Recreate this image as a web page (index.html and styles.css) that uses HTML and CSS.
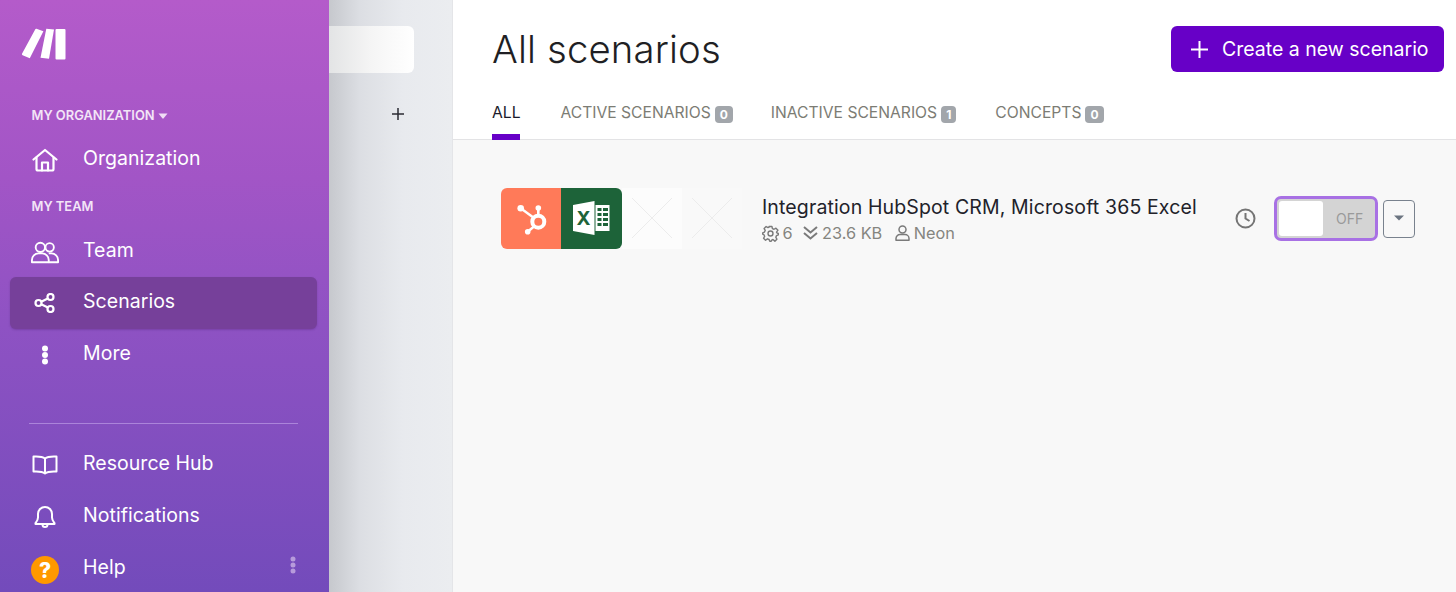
FILE: index.html
```html
<!DOCTYPE html>
<html lang="en">
<head>
<meta charset="utf-8">
<title>All scenarios</title>
<link rel="stylesheet" href="styles.css">
</head>
<body>
<div class="app">
  <aside class="sidebar">
    <svg class="logo" width="46" height="32" viewBox="0 0 46 32"><g fill="#fff"><path d="M15.500 .8 22.400 3.200 8.800 30.300 1.600 27.200Q.6 26.700 1 25.800L14.300 1.300Q14.700 .5 15.500 .8Z"/><path d="M25.300 .8 33 1.500 28 30.800 19.500 29.800Z"/><rect x="34.500" y="1" width="10" height="30.500" rx="1"/></g></svg>
    <div class="label org-label">MY ORGANIZATION<svg width="10" height="6" viewBox="0 0 10 6"><path d="M.5.500h9L5.700 5.300a1 1 0 0 1-1.400 0z" fill="#f0dcf5"/></svg></div>
    <a class="nav-item"><span class="nav-icon"><svg width="26" height="24" viewBox="0 0 26 24" fill="none" stroke="#fff" stroke-width="2.200" stroke-linejoin="round" stroke-linecap="round"><path d="M1.500 11.500 13 2l11.500 9.500"/><path d="M4.500 9.500V21a1.500 1.500 0 0 0 1.500 1.500h14a1.500 1.500 0 0 0 1.500-1.500V9.500"/><path d="M10 22.500V14.500h6v8"/></svg></span>Organization</a>
    <div class="label team-label">MY TEAM</div>
    <a class="nav-item"><span class="nav-icon"><svg width="28" height="23" viewBox="0 0 30 24" fill="none" stroke="#fff" stroke-width="2"><circle cx="10" cy="6.500" r="5"/><circle cx="20" cy="6.500" r="4.500"/><path d="M1 22.500v-2.500a7 7 0 0 1 7-7h4a7 7 0 0 1 7 7v2.500z" stroke-linejoin="round"/><path d="M19 13h3a7 7 0 0 1 7 7v2.500H19" stroke-linejoin="round"/></svg></span>Team</a>
    <a class="nav-item active"><span class="nav-icon"><svg width="22" height="20" viewBox="0 0 22 20" fill="none" stroke="#fff" stroke-width="2.200"><circle cx="16.500" cy="4" r="3"/><circle cx="4.500" cy="10" r="3"/><circle cx="16.500" cy="16" r="3"/><path d="M7.200 8.700 13.800 5.400M7.200 11.300l6.600 3.300"/></svg></span>Scenarios</a>
    <a class="nav-item"><span class="nav-icon"><svg width="8" height="20" viewBox="0 0 8 20" fill="#fff"><circle cx="4" cy="3.500" r="3"/><circle cx="4" cy="10" r="3"/><circle cx="4" cy="16.500" r="3"/></svg></span>More</a>
    <div class="spacer"></div>
    <hr class="divider">
    <a class="nav-item"><span class="nav-icon"><svg width="26" height="20" viewBox="0 0 26 20" fill="none" stroke="#fff" stroke-width="2" stroke-linejoin="round"><path d="M13 3.500C10.500 1.500 6.500 1.200 1.500 1.500v15c5-.3 9 0 11.500 2 2.500-2 6.500-2.300 11.500-2v-15C19.500 1.200 15.500 1.500 13 3.500z"/><path d="M13 3.500v15"/></svg></span>Resource Hub</a>
    <a class="nav-item"><span class="nav-icon"><svg width="22" height="24" viewBox="0 0 22 24" fill="none" stroke="#fff" stroke-width="2" stroke-linejoin="round"><path d="M11 2a7 7 0 0 0-7 7v3.500c0 2.500-1.200 3.800-2.500 5.500v1h19v-1c-1.300-1.700-2.500-3-2.500-5.500V9a7 7 0 0 0-7-7z"/><path d="M8.500 19.500a2.500 2.500 0 0 0 5 0"/></svg></span>Notifications</a>
    <a class="nav-item help"><span class="nav-icon"><span class="help-badge">?</span></span>Help<svg class="help-dots" width="6" height="18" viewBox="0 0 6 18" fill="#b79bdb"><circle cx="3" cy="3" r="2.500"/><circle cx="3" cy="9" r="2.500"/><circle cx="3" cy="15" r="2.500"/></svg></a>
  </aside>

  <section class="panel">
    <div class="search"></div>
    <div class="add-row">
      <svg width="12" height="12" viewBox="0 0 12 12" stroke="#2b2b33" stroke-width="1.500"><path d="M6 0v12M0 6h12"/></svg>
    </div>
  </section>

  <main class="main">
    <header class="head">
      <div class="title-row">
        <h1>All scenarios</h1>
        <button class="create"><svg width="17" height="17" viewBox="0 0 17 17" stroke="#fff" stroke-width="2"><path d="M8.500 0v17M0 8.500h17"/></svg>Create a new scenario</button>
      </div>
      <nav class="tabs">
        <a class="tab current">ALL</a>
        <a class="tab">ACTIVE SCENARIOS<span class="count">0</span></a>
        <a class="tab">INACTIVE SCENARIOS<span class="count">1</span></a>
        <a class="tab">CONCEPTS<span class="count">0</span></a>
      </nav>
    </header>
    <div class="content">
      <article class="row">
        <div class="apps">
          <span class="app-tile hubspot"><svg width="60" height="61" viewBox="0 0 60 61" fill="none" stroke="#fff"><circle cx="37.300" cy="33.700" r="6" stroke-width="4"/><path d="M37.300 27V21" stroke-width="2.600"/><circle cx="37.300" cy="20" r="2.800" fill="#fff" stroke="none"/><path d="M19.700 20.300 33 30" stroke-width="2.400"/><circle cx="19.700" cy="20.300" r="3.300" fill="#fff" stroke="none"/><path d="M33 38.500 26.700 43.700" stroke-width="2.400"/><circle cx="26.700" cy="43.700" r="2.800" fill="#fff" stroke="none"/></svg></span>
          <span class="app-tile excel"><svg width="37" height="34" viewBox="0 0 37 34"><path d="M0 4 21.500 0v34L0 30z" fill="#fff"/><path d="M22.500 4H36.500v26H22.500z" fill="#fff"/><path d="M24.500 7h4v3h-4zM30 7h5v3h-5zM24.500 12h4v3h-4zM30 12h5v3h-5zM24.500 17h4v3h-4zM30 17h5v3h-5zM24.500 22h4v3h-4zM30 22h5v3h-5z" fill="#1d6339"/><text x="10.500" y="24" class="xl">X</text></svg></span>
          <span class="app-tile blank"><svg width="40" height="40" viewBox="0 0 40 40" stroke="#ececec"><path d="M0 0l40 40M40 0 0 40"/></svg></span>
          <span class="app-tile blank faint"><svg width="40" height="40" viewBox="0 0 40 40" stroke="#ececec"><path d="M0 0l40 40M40 0 0 40"/></svg></span>
        </div>
        <div class="info">
          <div class="name">Integration HubSpot CRM, Microsoft 365 Excel</div>
          <div class="meta">
            <span class="meta-item"><svg width="17" height="17" viewBox="0 0 24 24" fill="none" stroke="#7a7a7a" stroke-width="2" stroke-linejoin="round"><circle cx="12" cy="12" r="3.500"/><path d="M10 2h4l.7 3 2.300 1 2.700-1.500 2.800 2.800L20.500 10l.5 1 2 1v2l-2.500 1-1 2.300 1.500 2.700-2.800 2.800L15.500 20.500l-1.500.5-1 2h-2l-1-2.500-2.300-1L5 21.500 2.200 18.700 3.700 16l-1-2.300L1 13v-2l2.500-1 1-2.300L3 5l2.800-2.800L8.500 3.700 10 3z"/></svg>6</span>
            <span class="meta-item"><svg width="15" height="14" viewBox="0 0 15 14" fill="none" stroke="#7a7a7a" stroke-width="2"><path d="M1 1l6.500 5.500L14 1M1 7l6.500 5.500L14 7"/></svg>23.6 KB</span>
            <span class="meta-item"><svg width="15" height="16" viewBox="0 0 15 16" fill="none" stroke="#7a7a7a" stroke-width="1.500"><circle cx="7.500" cy="4.500" r="3.500"/><path d="M1 15.200v-1.700a4 4 0 0 1 4-4h5a4 4 0 0 1 4 4v1.700z" stroke-linejoin="round"/></svg>Neon</span>
          </div>
        </div>
        <svg class="clock" width="21" height="21" viewBox="0 0 21 21" fill="none" stroke="#757575" stroke-width="2"><circle cx="10.500" cy="10.500" r="9"/><path d="M10.500 5v5.500l4 2.500"/></svg>
        <div class="toggle"><span class="knob"></span><span class="off">OFF</span></div>
        <button class="drop"><svg width="10" height="6" viewBox="0 0 10 6"><path d="M0 .5h10L5 5.500z" fill="#6b7480"/></svg></button>
      </article>
    </div>
  </main>
</div>
</body>
</html>
```

FILE: styles.css
```css
* { box-sizing: border-box; }
html, body { margin: 0; height: 100%; }
body { font-family: Inter, "Liberation Sans", sans-serif; overflow: hidden; background: #fff; }
.app { display: flex; height: 592px; width: 1456px; }

.sidebar {
  width: 329px; flex: none; height: 592px; display: flex; flex-direction: column;
  background: linear-gradient(180deg, #b45bca 0%, #a255c6 30%, #8e52c3 55%, #734bbb 100%);
  color: #fff; padding: 28px 12px 0 10px;
}
.logo { display: block; margin-left: 11px; flex: none; }
.label { font-size: 12.900px; font-weight: 600; line-height: 16px; color: #f3e5f7; padding-left: 21.500px; flex: none; }
.org-label { margin-top: 48px; display: flex; align-items: center; gap: 3px; }
.team-label { margin-top: 15px; margin-bottom: 13px; }
.nav-item {
  display: flex; align-items: center; height: 52px; font-size: 19.500px; color: #fff; flex: none;
  letter-spacing: .04px; border-radius: 6px; position: relative; padding-bottom: 4px;
}
.org-label + .nav-item { margin-top: 12px; height: 48px; }
.team-label + .nav-item { height: 49px; padding-bottom: 5px; }
.nav-icon { width: 73px; padding-left: 8px; padding-right: 11px; flex: none; display: flex; justify-content: center; margin-top: 4px; }
.nav-item.active { background: #76409a; box-shadow: 0 1px 2px rgba(60,20,90,.25); }
.spacer { height: 42px; flex: none; }
.divider { border: 0; border-top: 1px solid #ab84da; margin: 0 19px; width: 269px; height: 1px; flex: none; }
.divider + .nav-item { margin-top: 15px; }
.nav-item.help { height: 49px; padding-bottom: 1px; }
.help .nav-icon { margin-top: 6px; }
.help-badge {
  width: 28px; height: 28px; border-radius: 50%; background: #ff9800; color: #fff; font-weight: 800;
  font-size: 21px; display: flex; align-items: center; justify-content: center;
}
.help-dots { position: absolute; right: 21px; top: 13px; }

.panel {
  width: 124px; flex: none; height: 592px; border-right: 1px solid #e4e5e8;
  background: linear-gradient(90deg, #c6c8cd 0%, #dcdee3 25%, #e8eaee 60%, #ebedf0 100%);
  padding-top: 26px;
}
.search {
  width: 85px; height: 47px; border-radius: 0 6px 6px 0;
  background: linear-gradient(90deg, #e3e4e5 0%, #f5f5f5 50%, #fff 100%);
}
.add-row { margin-top: 35px; display: flex; justify-content: flex-end; padding-right: 48px; }
.add-row svg { display: block; }

.main { flex: 1; min-width: 0; display: flex; flex-direction: column; background: #f8f8f8; }
.head { background: #fff; height: 140px; border-bottom: 1px solid #e3e3e5; padding-left: 39px; flex: none; }
.title-row { display: flex; justify-content: space-between; align-items: flex-start; padding: 26px 12px 0 0; height: 87px; }
h1 { margin: 0; font-size: 38.300px; font-weight: 300; line-height: 46px; color: #1f1f24; letter-spacing: .15px; }
.create {
  width: 273px; height: 46px; background: #6700c7; border: 0; border-radius: 6px; color: #fff; font: inherit;
  font-size: 19.500px; display: flex; align-items: center; gap: 14px; padding: 0 0 0 20px;
}
.tabs { display: flex; gap: 38px; height: 53px; }
.tab { font-size: 15.650px; color: #7c7c74; height: 53px; padding-top: 16px; line-height: 19px; font-weight: 400; display: block; }
.tab.current { color: #1a1a2a; border-bottom: 6px solid #6700c7; margin-right: 2px; }
.tab:last-child { margin-left: 1px; }
.count {
  display: inline-block; vertical-align: -1px; margin-left: 4px; padding: 0 5px; height: 17px; border-radius: 4px; background: #a2a6ab;
  color: #fff; font-size: 12px; font-weight: 700; text-align: center; line-height: 17px;
}

.content { flex: 1; padding: 47px 41px 0 48px; }
.row { display: flex; align-items: center; height: 62px; }
.apps { display: flex; width: 261px; flex: none; height: 61px; }
.app-tile { width: 60px; height: 61px; display: flex; align-items: center; justify-content: center; flex: none; }
.excel { width: 61px; }
.hubspot { background: #ff7a59; border-radius: 6px 0 0 6px; }
.excel { background: #1d6339; border-radius: 0 6px 6px 0; }
.blank { background: #fcfcfc; }
.blank.faint { background: #f9f9f9; }
.xl { font-family: Inter, sans-serif; font-weight: 700; font-size: 19px; fill: #1d6339; text-anchor: middle; }
.info { width: 473px; flex: none; padding-top: 2px; }
.name { font-size: 19.500px; line-height: 25px; color: #22222a; letter-spacing: .13px; white-space: nowrap; }
.meta { display: flex; gap: 10.500px; font-size: 16.300px; line-height: 20px; color: #85857f; margin-top: 3px; }
.meta-item { display: flex; align-items: center; gap: 4px; }
.meta-item:first-child { gap: 3.500px; }
.meta-item:last-child { margin-left: 2px; }
.clock { flex: none; }
.toggle {
  margin-left: 18px; width: 104px; height: 45px; border: 3px solid #a871e4; border-radius: 7px; background: #d4d4d4;
  display: flex; align-items: center; padding: 2px; flex: none;
}
.knob { width: 44px; height: 35px; background: #fff; border-radius: 3px; flex: none; }
.off { font-size: 14px; color: #9a9a9a; margin-left: 13px; }
.drop {
  margin-left: 5px; margin-top: 2px; width: 32px; height: 38px; border: 1px solid #79828e; border-radius: 4px; background: #f8f8f8;
  display: flex; align-items: center; justify-content: center; padding: 0 0 2px; flex: none;
}
```
